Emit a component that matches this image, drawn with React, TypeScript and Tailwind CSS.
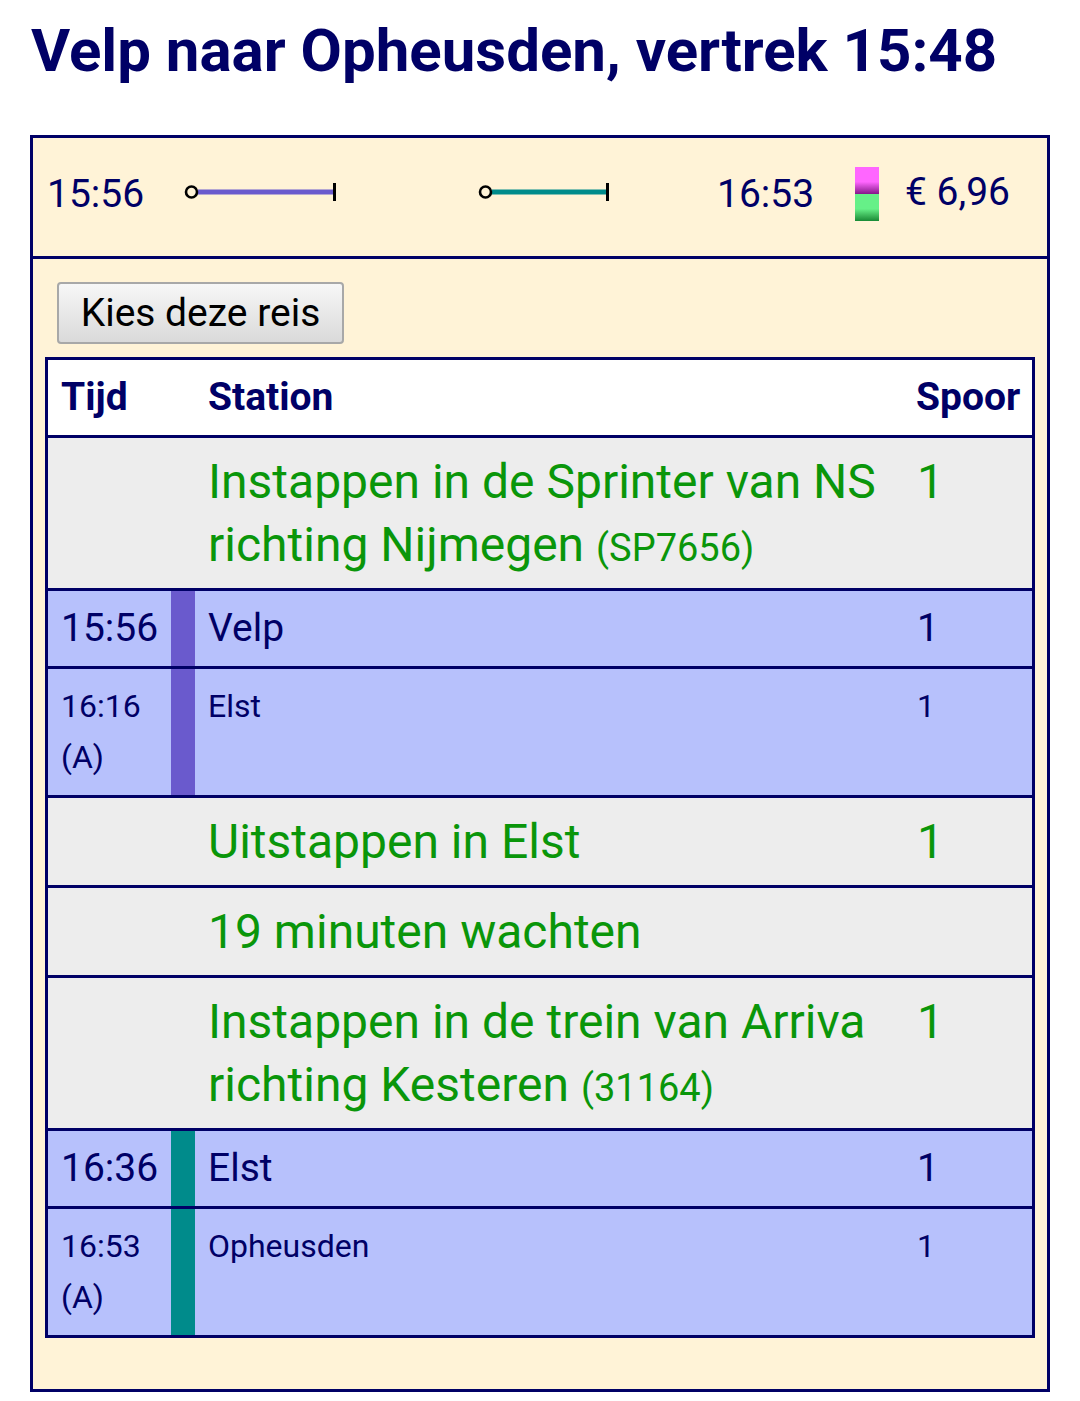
import React from 'react';

type Stop = {
  kind: 'stop';
  time: string;
  arr?: boolean;
  station: string;
  spoor: string;
  color: string;
  big?: boolean;
};

type Note = {
  kind: 'note';
  text: string;
  extra?: string;
  spoor?: string;
};

const rows: (Stop | Note)[] = [
  { kind: 'note', text: 'Instappen in de Sprinter van NS richting Nijmegen', extra: '(SP7656)', spoor: '1' },
  { kind: 'stop', time: '15:56', station: 'Velp', spoor: '1', color: '#6a5acd', big: true },
  { kind: 'stop', time: '16:16', arr: true, station: 'Elst', spoor: '1', color: '#6a5acd' },
  { kind: 'note', text: 'Uitstappen in Elst', spoor: '1' },
  { kind: 'note', text: '19 minuten wachten' },
  { kind: 'note', text: 'Instappen in de trein van Arriva richting Kesteren', extra: '(31164)', spoor: '1' },
  { kind: 'stop', time: '16:36', station: 'Elst', spoor: '1', color: '#008b8b', big: true },
  { kind: 'stop', time: '16:53', arr: true, station: 'Opheusden', spoor: '1', color: '#008b8b' },
];

function Leg({ color, width }: { color: string; width: number }) {
  // small open circle, coloured bar, end tick
  return (
    <svg width={width} height={24} viewBox={`0 0 ${width} 24`} className="block">
      <line x1={14} y1={12} x2={width - 4} y2={12} stroke={color} strokeWidth={5} />
      <circle cx={7.5} cy={12} r={5.5} fill="none" stroke="#000" strokeWidth={2.6} />
      <line x1={width - 2.5} y1={3} x2={width - 2.5} y2={21} stroke="#000" strokeWidth={3} />
    </svg>
  );
}

export default function App() {
  return (
    <div className="min-h-screen bg-white px-[30px] pb-[10px]" style={{ fontFamily: 'Roboto, "Noto Sans", sans-serif' }}>
      <h1 className="pt-[16px] text-[60px] font-bold leading-[70px] text-[#000066] pl-[1px]">
        Velp naar Opheusden, vertrek 15:48
      </h1>

      <div className="mt-[49px] border-[3px] border-[#000066] bg-[#fff3d7]">
        {/* summary bar */}
        <div className="flex h-[121px] items-center text-[39px] text-[#000066] border-b-[3px] border-[#000066]">
          <div className="w-[151px] pl-[14px] pb-[5px]">15:56</div>
          <div className="w-[294px] pb-[11px]">
            <Leg color="#6a5acd" width={153} />
          </div>
          <div className="w-[230px] pb-[11px]">
            <Leg color="#008b8b" width={132} />
          </div>
          <div className="w-[142px] pl-[9px] pb-[5px]">16:53</div>
          <div className="w-[50px] pl-[5px] pb-[7px]">
            <div className="h-[27px] w-[24px] bg-linear-to-b from-[#ff66ff] from-55% to-[#86168a]" />
            <div className="h-[27px] w-[24px] bg-linear-to-b from-[#66f088] from-55% to-[#178a35]" />
          </div>
          <div className="pl-[5px] pb-[9px]">€ 6,96</div>
        </div>

        {/* details */}
        <div className="px-[12px] pt-[23px] pb-[51px]">
          <button className="ml-[12px] h-[62px] w-[287px] rounded-[4px] border-2 border-[#a8a8a8] bg-linear-to-b from-[#f7f7f7] to-[#dadada] text-[39px] leading-none text-black">
            Kies deze reis
          </button>

          <div className="mt-[13px] border-[3px] border-[#000066]">
            <div className="grid grid-cols-[123px_24px_708px_129px] bg-white text-[39px] font-bold leading-[51px] text-[#000066]">
              <div className="py-[12px] pl-[13px]">Tijd</div>
              <div />
              <div className="py-[12px] pl-[13px]">Station</div>
              <div className="py-[12px] pl-[13px]">Spoor</div>
            </div>

            {rows.map((r, i) =>
              r.kind === 'note' ? (
                <div
                  key={i}
                  className="grid grid-cols-[123px_24px_708px_129px] border-t-[3px] border-[#000066] bg-[#ededed] text-[48px] leading-[63px] text-[#0a960a]"
                >
                  <div />
                  <div />
                  <div className="py-[12px] pl-[13px] pr-[8px]">
                    {r.text}
                    {r.extra && <span className="ml-[12px] text-[38px] leading-none">{r.extra}</span>}
                  </div>
                  <div className="py-[12px] pl-[14px]">{r.spoor}</div>
                </div>
              ) : (
                <div
                  key={i}
                  className="grid grid-cols-[123px_24px_708px_129px] border-t-[3px] border-[#000066] bg-[#b7c1fc] leading-[51px] text-[#000066]"
                >
                  <div className={`py-[12px] pl-[13px] ${r.big ? 'text-[39px]' : 'text-[32px]'}`}>
                    {r.time}
                    {r.arr && <div>(A)</div>}
                  </div>
                  <div style={{ backgroundColor: r.color }} />
                  <div className={`py-[12px] pl-[13px] ${r.big ? 'text-[39px]' : 'text-[32px]'}`}>{r.station}</div>
                  <div className={`py-[12px] pl-[14px] ${r.big ? 'text-[39px]' : 'text-[32px]'}`}>{r.spoor}</div>
                </div>
              )
            )}
          </div>
        </div>
      </div>
    </div>
  );
}
